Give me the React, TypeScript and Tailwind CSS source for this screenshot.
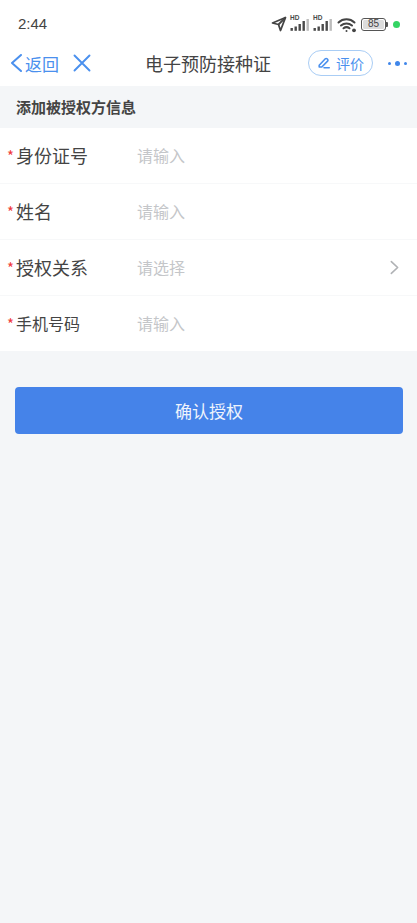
const FONT = "font-['Noto_Sans_CJK_SC','Noto_Sans',sans-serif]";

const FIELDS = [
  { label: "身份证号", hint: "请输入", size: "text-[18px]" },
  { label: "姓名", hint: "请输入", size: "text-[18px]" },
  { label: "授权关系", hint: "请选择", size: "text-[18px]", arrow: true },
  { label: "手机号码", hint: "请输入", size: "text-[16px]" },
];

function Signal() {
  return (
    <div className="relative w-[20px] h-[16px] text-[#4a4a4a]">
      <span className="absolute left-0 top-[-2px] text-[6.5px] font-bold leading-[8px] font-['Liberation_Sans',sans-serif]">HD</span>
      <svg viewBox="0 0 20 16" className="w-[20px] h-[16px]" fill="currentColor">
        <rect x="0.5" y="12" width="2.4" height="2.8" />
        <rect x="4.5" y="10.5" width="2.4" height="4.3" />
        <rect x="8.5" y="8" width="2.4" height="6.8" />
        <rect x="12.5" y="5" width="2.4" height="9.8" />
        <rect x="16.5" y="3" width="2.4" height="11.8" fill="#bcbcbc" />
      </svg>
    </div>
  );
}

function StatusBar() {
  return (
    <div className="h-[44px] flex items-center justify-between pl-[18px] pr-[17px] pt-[4px]">
      <span className="text-[15px] font-medium text-[#444] font-['Liberation_Sans',sans-serif]">2:44</span>
      <div className="flex items-center">
        <svg viewBox="0 0 16 16" className="w-[16px] h-[16px] text-[#444]" fill="none" stroke="currentColor" strokeWidth="1.8" strokeLinejoin="round">
          <path d="M14.5 1.5 1.5 7l6 1.5L9.5 14.5z" />
          <path d="M14.5 1.5 7.5 8.5" />
        </svg>
        <div className="ml-[3px]"><Signal /></div>
        <div className="ml-[3px]"><Signal /></div>
        <svg viewBox="0 0 20 16" className="ml-[4px] w-[20px] h-[17px] text-[#444]" fill="none" stroke="currentColor" strokeWidth="2" strokeLinecap="round">
          <path d="M1.5 6C6 1.8 13 1.8 17.5 6" />
          <path d="M4 9c3.2-2.8 7.8-2.8 11 0" />
          <path d="M6.5 11.8c2-1.6 4-1.6 6 0" />
          <circle cx="9.5" cy="14.4" r="1" fill="currentColor" stroke="none" />
          <circle cx="17" cy="13.8" r="1.9" fill="currentColor" stroke="none" />
        </svg>
        <div className="ml-[4px] flex items-center">
          <div className="w-[25px] h-[13px] rounded-[3px] border border-[#555] p-[1px] flex">
            <div className="flex-1 rounded-[1.5px] bg-[#dcdcdc] flex items-center justify-center text-[10px] leading-none text-[#444] font-['Liberation_Sans',sans-serif]">85</div>
          </div>
          <div className="w-[2px] h-[5px] bg-[#555] rounded-r-[1px]" />
        </div>
        <div className="ml-[5px] w-[7px] h-[7px] rounded-full bg-[#34d463]" />
      </div>
    </div>
  );
}

function NavBar() {
  return (
    <div className="h-[42px] relative flex items-center justify-between pl-[10px] pr-[10px] pb-[4px]">
      <div className="flex items-center text-[#4a90ee]">
        <svg viewBox="0 0 12 18" className="w-[12px] h-[18px]" fill="none" stroke="currentColor" strokeWidth="2" strokeLinecap="round" strokeLinejoin="round">
          <path d="M11 1 2 9l9 8" />
        </svg>
        <span className="ml-[3px] text-[17px] leading-none">返回</span>
        <svg viewBox="0 0 18 18" className="ml-[14px] w-[18px] h-[18px]" fill="none" stroke="currentColor" strokeWidth="1.9" strokeLinecap="round">
          <path d="M1.5 1.5 16.5 16.5M16.5 1.5 1.5 16.5" />
        </svg>
      </div>
      <span className="absolute left-[145px] text-[18px] text-[#444] leading-none">电子预防接种证</span>
      <div className="flex items-center">
        <div className="w-[65px] h-[26px] rounded-full border border-[#a9cdf5] flex items-center justify-center gap-[5px] text-[#4a90ee]">
          <svg viewBox="0 0 16 16" className="w-[14px] h-[14px]" fill="none" stroke="currentColor" strokeWidth="1.8" strokeLinejoin="round" strokeLinecap="round">
            <path d="M2.5 10.5 9.5 3.2a1.4 1.4 0 0 1 2 0l.6.6a1.4 1.4 0 0 1 0 2L5.5 12.5H2.5z" />
            <path d="M8 13.5h6" />
          </svg>
          <span className="text-[14px] leading-none">评价</span>
        </div>
        <div className="ml-[15px] flex items-center gap-[4px]">
          <div className="w-[3px] h-[3px] rounded-full bg-[#3f86ea]" />
          <div className="w-[5px] h-[5px] rounded-full bg-[#3f86ea]" />
          <div className="w-[3px] h-[3px] rounded-full bg-[#3f86ea]" />
        </div>
      </div>
    </div>
  );
}

export default function App() {
  return (
    <div className={`${FONT} w-full min-h-[923px] bg-[#f4f6f8] flex flex-col`}>
      <div className="bg-white">
        <StatusBar />
        <NavBar />
      </div>
      <div className="h-[42px] flex items-center pl-[16px] text-[15px] font-bold text-[#444]">添加被授权方信息</div>
      <div className="bg-white">
        {FIELDS.map((f, i) => (
          <div key={f.label} className={`flex items-center pl-[7px] pr-[18px] ${i < 3 ? "h-[56px] border-b border-[#f7f8f9]" : "h-[55px]"}`}>
            <span className="w-[9px] text-[15px] leading-none text-[#f03a3a]">*</span>
            <span className={`w-[121px] ${f.size} text-[#444] leading-none -mt-[1px]`}>{f.label}</span>
            <span className="flex-1 text-[16px] text-[#c4c6c9] leading-none -mt-[1px]">{f.hint}</span>
            {f.arrow && (
              <svg viewBox="0 0 10 16" className="w-[9px] h-[15px] text-[#b0b2b5]" fill="none" stroke="currentColor" strokeWidth="1.8" strokeLinecap="round" strokeLinejoin="round">
                <path d="M1.5 1.5 8.5 8l-7 6.5" />
              </svg>
            )}
          </div>
        ))}
      </div>
      <div className="mt-[36px] ml-[15px] mr-[14px] h-[47px] rounded-[4px] bg-[#4583e9] flex items-center justify-center text-[17px] text-[#eef3fc]">确认授权</div>
    </div>
  );
}
